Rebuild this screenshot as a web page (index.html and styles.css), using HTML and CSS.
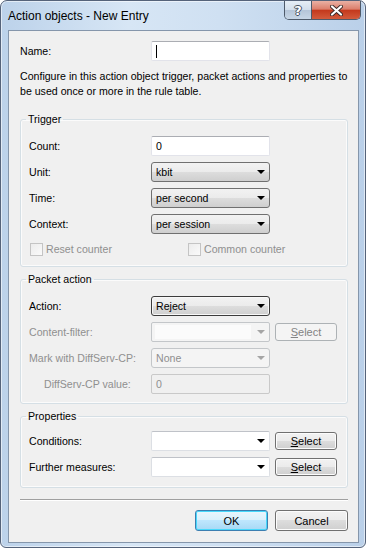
FILE: index.html
```html
<!DOCTYPE html>
<html lang="en">
<head>
  <meta charset="UTF-8">
  <title>Action objects - New Entry</title>
  <link rel="stylesheet" href="styles.css">
</head>
<body>

  <div class="window">
    <div class="titlebar">
      <span class="title">Action objects - New Entry</span>
      <div class="caption-buttons">
        <span class="cap-btn help">?</span>
        <span class="cap-btn close">
          <svg width="13" height="11" viewBox="0 0 13 11">
            <path d="M2 1.5 L11 9.5 M11 1.5 L2 9.5" stroke="#3b2a28" stroke-width="4" stroke-linecap="round"/>
            <path d="M2 1.5 L11 9.5 M11 1.5 L2 9.5" stroke="#fff" stroke-width="2.2" stroke-linecap="round"/>
          </svg>
        </span>
      </div>
    </div>

    <div class="client">
      <div class="row name-row">
        <span class="label">Name:</span>
        <div class="control textbox"><span class="caret"></span></div>
      </div>

      <p class="intro">Configure in this action object trigger, packet actions and properties to<br>be used once or more in the rule table.</p>

      <fieldset class="group trigger">
        <legend>Trigger</legend>
        <div class="row">
          <span class="label">Count:</span>
          <div class="control textbox">0</div>
        </div>
        <div class="row">
          <span class="label">Unit:</span>
          <div class="control dropdown">kbit<span class="arrow"></span></div>
        </div>
        <div class="row">
          <span class="label">Time:</span>
          <div class="control dropdown">per second<span class="arrow"></span></div>
        </div>
        <div class="row">
          <span class="label">Context:</span>
          <div class="control dropdown">per session<span class="arrow"></span></div>
        </div>
        <div class="check-row">
          <label class="check first"><span class="box"></span>Reset counter</label>
          <label class="check"><span class="box"></span>Common counter</label>
        </div>
      </fieldset>

      <fieldset class="group packet">
        <legend>Packet action</legend>
        <div class="row">
          <span class="label">Action:</span>
          <div class="control dropdown focused">Reject<span class="arrow"></span></div>
        </div>
        <div class="row disabled">
          <span class="label">Content-filter:</span>
          <div class="control combo off"><span class="combo-edit"></span><span class="arrow"></span></div>
          <button class="btn pick" disabled><u>S</u>elect</button>
        </div>
        <div class="row disabled">
          <span class="label">Mark with DiffServ-CP:</span>
          <div class="control dropdown off">None<span class="arrow"></span></div>
        </div>
        <div class="row disabled">
          <span class="label indent">DiffServ-CP value:</span>
          <div class="control textbox off">0</div>
        </div>
      </fieldset>

      <fieldset class="group props">
        <legend>Properties</legend>
        <div class="row">
          <span class="label">Conditions:</span>
          <div class="control combo"><span class="arrow"></span></div>
          <button class="btn pick"><u>S</u>elect</button>
        </div>
        <div class="row">
          <span class="label">Further measures:</span>
          <div class="control combo"><span class="arrow"></span></div>
          <button class="btn pick"><u>S</u>elect</button>
        </div>
      </fieldset>

      <div class="separator"></div>

      <div class="dialog-buttons">
        <button class="btn default">OK</button>
        <button class="btn">Cancel</button>
      </div>
    </div>
  </div>

</body>
</html>
```

FILE: styles.css
```css
body {
  margin: 0;
  background: #fff;
  font-family: 'Liberation Sans', Arial, sans-serif;
  font-size: 10.6px;
  color: #000;
}

.window {
  width: 366px;
  height: 548px;
  box-sizing: border-box;
  border: 1px solid #55637a;
  border-radius: 7px 7px 6px 6px;
  padding: 0 6px 4px 7px;
  background: linear-gradient(to right, #bcd2ea 0%, #d7e6f5 35%, #cfe0f2 60%, #bad0e9 100%);
  box-shadow: inset 0 0 0 1px rgba(255, 255, 255, 0.55);
}

.titlebar {
  height: 29px;
  display: flex;
  justify-content: space-between;
  align-items: flex-start;
}

.title {
  font-size: 12px;
  line-height: 29px;
  padding-top: 1px;
}

.caption-buttons {
  display: flex;
  margin-right: -2px;
  border: 1px solid #4e5a6a;
  border-top: none;
  border-radius: 0 0 5px 5px;
  overflow: hidden;
  height: 18px;
}

.cap-btn {
  display: flex;
  align-items: center;
  justify-content: center;
  height: 18px;
}

.help {
  width: 26px;
  border-right: 1px solid #4e5a6a;
  background: linear-gradient(#e6eef6 0%, #d3dfec 48%, #b5c5d8 52%, #c7d6e6 100%);
  color: #fff;
  font-family: 'DejaVu Sans', sans-serif;
  font-weight: bold;
  font-size: 13px;
  text-shadow: -1px 0 #46515f, 1px 0 #46515f, 0 -1px #46515f, 0 1px #46515f;
}

.close {
  width: 48px;
  background: linear-gradient(#eab1a4 0%, #dc7f6c 45%, #c4391d 52%, #d35b3c 100%);
}

.client {
  height: 513px;
  box-sizing: border-box;
  border: 1px solid #8596ab;
  background: #f0f0f0;
  padding: 10px 10px 0 11px;
}

.row {
  display: flex;
  align-items: center;
  height: 20px;
}

.row + .row {
  margin-top: 6px;
}

.label {
  width: 122px;
  flex: none;
}

.name-row .label {
  width: 131px;
}

.indent {
  padding-left: 15px;
  box-sizing: border-box;
}

.disabled .label {
  color: #8f8f8f;
}

.control {
  position: relative;
  width: 119px;
  height: 20px;
  box-sizing: border-box;
  flex: none;
  display: flex;
  align-items: center;
  padding-left: 4px;
  border-radius: 2px;
}

.textbox {
  background: #fff;
  border: 1px solid #e2e3ea;
  border-top-color: #abadb3;
}

.textbox.off {
  background: #f0f0f0;
  border-color: #c9c9c9;
  color: #8f8f8f;
}

.caret {
  width: 1px;
  height: 13px;
  background: #000;
}

.dropdown {
  border: 1px solid #707070;
  border-radius: 3px;
  background: linear-gradient(#f2f2f2 0%, #ebebeb 50%, #dddddd 50%, #cfcfcf 100%);
}

.dropdown.focused {
  border-color: #3c3c3c;
  box-shadow: inset 0 0 0 1px #f8f8f8;
}

.dropdown.off,
.combo.off {
  border: 1px solid #c3c6c9;
  background: #f4f4f4;
  color: #8f8f8f;
}

.combo {
  background: #fff;
  border: 1px solid #dcdfe4;
  border-top-color: #bfc2c8;
}

.combo-edit {
  width: 96px;
  height: 14px;
  background: #fbfbfb;
  margin-left: -1px;
}

.arrow {
  position: absolute;
  right: 4px;
  top: 7px;
  width: 0;
  height: 0;
  border-left: 4px solid transparent;
  border-right: 4px solid transparent;
  border-top: 4px solid #000;
}

.off .arrow {
  border-top-color: #a5a5a5;
}

.intro {
  margin: 8px 0 0;
  line-height: 15px;
  white-space: nowrap;
}

.group {
  margin: 0;
  width: 328px;
  box-sizing: border-box;
  border: 1px solid #d5dfe5;
  border-radius: 3px;
  box-shadow: inset 0 0 0 1px #fbfbfb;
  padding: 10px 8px 10px 8px;
  min-inline-size: 0;
}

.group legend {
  padding: 0 2px;
  margin-left: -3px;
  line-height: 14px;
}

.trigger {
  margin-top: 13px;
}

.packet {
  margin-top: 5px;
  padding-bottom: 9px;
}

.props {
  margin-top: 5px;
  padding-top: 8px;
  padding-bottom: 10px;
}

.check-row {
  display: flex;
  align-items: center;
  margin-top: 8px;
  height: 14px;
  color: #8f8f8f;
}

.check {
  display: flex;
  align-items: center;
  gap: 3px;
  padding-left: 1px;
}

.check.first {
  width: 157px;
}

.box {
  width: 13px;
  height: 13px;
  box-sizing: border-box;
  border: 1px solid #c4c4c4;
  background: linear-gradient(135deg, #ececec, #fafafa);
}

.btn {
  font-family: inherit;
  font-size: 11px;
  color: #000;
  border: 1px solid #707070;
  border-radius: 3px;
  background: linear-gradient(#f2f2f2 0%, #ebebeb 50%, #dddddd 50%, #cfcfcf 100%);
  box-shadow: inset 0 0 0 1px #fcfcfc;
  padding: 0;
  margin: 0;
}

.pick {
  width: 62px;
  height: 18px;
  margin-left: 5px;
}

.pick:disabled {
  border-color: #adb2b5;
  background: #f4f4f4;
  box-shadow: none;
  color: #838383;
}

.separator {
  margin-top: 11px;
  width: 328px;
  border-top: 1px solid #a0a0a0;
  border-bottom: 1px solid #fff;
}

.dialog-buttons {
  width: 328px;
  display: flex;
  justify-content: flex-end;
  gap: 7px;
  margin-top: 9px;
}

.dialog-buttons .btn {
  width: 73px;
  height: 21px;
}

.btn.default {
  border-color: #3c7fb1;
  background: linear-gradient(#eaf6fd 0%, #d9f0fc 50%, #bee6fd 50%, #a7d9f5 100%);
  box-shadow: inset 0 0 0 1px #48d8fb;
}
```
